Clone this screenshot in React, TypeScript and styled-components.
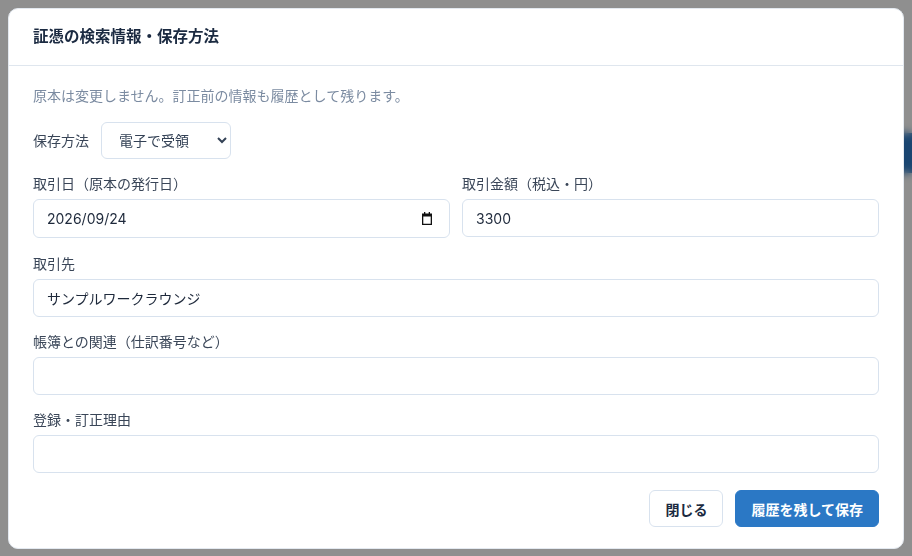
import styled, { createGlobalStyle } from 'styled-components';

const GlobalStyle = createGlobalStyle`
  html, body {
    margin: 0;
    padding: 0;
    height: 100%;
  }
  body {
    font-family: 'Inter', 'Noto Sans CJK JP', sans-serif;
    background: #ffffff;
  }
  * {
    box-sizing: border-box;
  }
`;

const PageBehind = styled.div`
  position: fixed;
  inset: 0;
  display: flex;
  justify-content: flex-end;
  padding: 133px 0 0 0;
  background: #ffffff;
`;

const BehindButton = styled.div`
  width: 120px;
  height: 40px;
  margin-right: -100px;
  border-radius: 8px;
  background: #2f7cc9;
`;

const Overlay = styled.div`
  position: fixed;
  inset: 0;
  display: flex;
  align-items: flex-start;
  justify-content: center;
  padding: 8px;
  background: rgba(0, 0, 0, 0.44);
  backdrop-filter: blur(4px);
`;

const Modal = styled.div`
  width: 896px;
  background: #ffffff;
  border: 1px solid #e3e9f0;
  border-radius: 10px;
  overflow: hidden;
`;

const Header = styled.div`
  padding: 16px 24px;
  border-bottom: 1px solid #dfe6ee;
`;

const Title = styled.h2`
  margin: 0;
  font-size: 15.5px;
  line-height: 24px;
  font-weight: 700;
  color: #1b2a41;
`;

const Body = styled.div`
  display: flex;
  flex-direction: column;
  gap: 14px;
  padding: 20px 24px 21px;
`;

const Description = styled.p`
  margin: 0 0 2px;
  font-size: 14px;
  line-height: 20px;
  color: #7b8ba1;
`;

const InlineRow = styled.div`
  display: flex;
  align-items: center;
  gap: 12px;
`;

const TwoCols = styled.div`
  display: grid;
  grid-template-columns: 1fr 1fr;
  gap: 12px;
  margin-bottom: 1px;
`;

const Field = styled.div`
  display: flex;
  flex-direction: column;
`;

const Label = styled.label<{ $inline?: boolean }>`
  display: block;
  margin-bottom: ${(p) => (p.$inline ? '0' : '5px')};
  font-size: 14px;
  line-height: 21px;
  color: #3a4658;
`;

const TextInput = styled.input`
  width: 100%;
  height: 38px;
  padding: 8px 13px;
  font-family: inherit;
  font-size: 14px;
  line-height: 20px;
  color: #1e293b;
  background: #ffffff;
  border: 1px solid #d8e2ee;
  border-radius: 6px;
  outline: none;
`;

const DateBox = styled.div`
  display: flex;
  align-items: center;
  height: 39px;
  padding: 0 17px 0 0;
  background: #ffffff;
  border: 1px solid #d8e2ee;
  border-radius: 6px;
`;

const DateText = styled.input`
  flex: 1;
  min-width: 0;
  height: 100%;
  padding: 0 13px;
  font-family: inherit;
  font-size: 14px;
  color: #1e293b;
  background: transparent;
  border: none;
  outline: none;
`;

const Select = styled.select`
  width: 130px;
  height: 37px;
  padding: 0 10px 0 13px;
  font-family: inherit;
  font-size: 14px;
  color: #334155;
  background: #ffffff;
  border: 1px solid #d8e2ee;
  border-radius: 6px;
  outline: none;
`;

const Actions = styled.div`
  display: flex;
  justify-content: flex-end;
  gap: 12px;
  margin-top: 3px;
`;

const Button = styled.button<{ $primary?: boolean }>`
  height: 37px;
  padding: 0 15px;
  font-family: inherit;
  font-size: 14px;
  font-weight: 700;
  border-radius: 6px;
  cursor: pointer;
  color: ${(p) => (p.$primary ? '#ffffff' : '#1b2a41')};
  background: ${(p) => (p.$primary ? '#2b78c5' : '#ffffff')};
  border: 1px solid ${(p) => (p.$primary ? '#2b78c5' : '#d8e2ee')};
`;

const CalendarIcon = () => (
  <svg width="10" height="13" viewBox="0 0 10 13" aria-hidden="true">
    <rect x="2" y="0" width="1.3" height="2" fill="#111" />
    <rect x="6.7" y="0" width="1.3" height="2" fill="#111" />
    <path d="M0 1.5h10v11.5H0z M1.3 4.6v7.1h7.4V4.6z" fill="#111" fillRule="evenodd" />
  </svg>
);

const App = () => {
  return (
    <>
      <GlobalStyle />
      <PageBehind>
        <BehindButton />
      </PageBehind>
      <Overlay>
        <Modal>
          <Header>
            <Title>証憑の検索情報・保存方法</Title>
          </Header>
          <Body>
            <Description>原本は変更しません。訂正前の情報も履歴として残ります。</Description>
            <InlineRow>
              <Label $inline>保存方法</Label>
              <Select defaultValue="electronic">
                <option value="electronic">電子で受領</option>
                <option value="paper">紙で受領</option>
              </Select>
            </InlineRow>
            <TwoCols>
              <Field>
                <Label>取引日（原本の発行日）</Label>
                <DateBox>
                  <DateText type="text" defaultValue="2026/09/24" />
                  <CalendarIcon />
                </DateBox>
              </Field>
              <Field>
                <Label>取引金額（税込・円）</Label>
                <TextInput type="text" defaultValue="3300" />
              </Field>
            </TwoCols>
            <Field>
              <Label>取引先</Label>
              <TextInput type="text" defaultValue="サンプルワークラウンジ" />
            </Field>
            <Field>
              <Label>帳簿との関連（仕訳番号など）</Label>
              <TextInput type="text" />
            </Field>
            <Field>
              <Label>登録・訂正理由</Label>
              <TextInput type="text" />
            </Field>
            <Actions>
              <Button>閉じる</Button>
              <Button $primary>履歴を残して保存</Button>
            </Actions>
          </Body>
        </Modal>
      </Overlay>
    </>
  );
};

export default App;
